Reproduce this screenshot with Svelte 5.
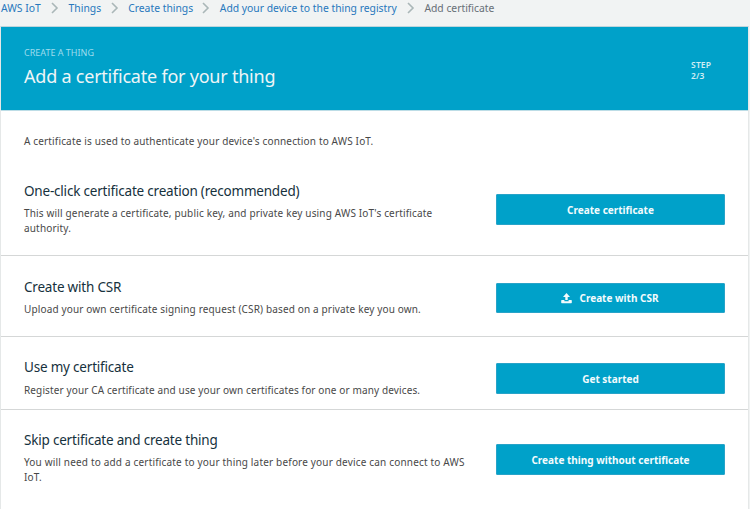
<script>
  const crumbs = [
    { label: 'AWS IoT', cls: 'c1' },
    { label: 'Things', cls: 'c2' },
    { label: 'Create things', cls: 'c3' },
    { label: 'Add your device to the thing registry', cls: 'c4' }
  ];
  const options = [
    { id: 'one-click', title: 'One-click certificate creation (recommended)', lines: ["This will generate a certificate, public key, and private key using AWS IoT's certificate", 'authority.'], action: 'Create certificate' },
    { id: 'csr', title: 'Create with CSR', lines: ['Upload your own certificate signing request (CSR) based on a private key you own.'], action: 'Create with CSR', upload: true },
    { id: 'own', title: 'Use my certificate', lines: ['Register your CA certificate and use your own certificates for one or many devices.'], action: 'Get started' },
    { id: 'skip', title: 'Skip certificate and create thing', lines: ['You will need to add a certificate to your thing later before your device can connect to AWS', 'IoT.'], action: 'Create thing without certificate' }
  ];
</script>

<div class="page">
  <nav>
    {#each crumbs as crumb}
      <a href="#top" class={crumb.cls}>{crumb.label}</a>
      <svg class="chevron" width="8" height="12" viewBox="0 0 8 12"><path d="M1 1l5 5-5 5" /></svg>
    {/each}
    <span class="current">Add certificate</span>
  </nav>
  <main>
    <header>
      <div>
        <p class="eyebrow">CREATE A THING</p>
        <h1>Add a certificate for your thing</h1>
      </div>
      <div class="step"><span>STEP</span><span>2/3</span></div>
    </header>
    <p class="intro">A certificate is used to authenticate your device's connection to AWS IoT.</p>
    {#each options as option}
      <section class={option.id}>
        <div class="copy">
          <h2>{option.title}</h2>
          {#each option.lines as line}<p>{line}</p>{/each}
        </div>
        <button>
          {#if option.upload}
            <svg class="upload" width="11" height="11" viewBox="0 0 11 11"><path d="M5.5 0L9 4H6.7v3H4.3V4H2zM.8 7h2.6v1.2h4.2V7h2.6q.6 0 .6.6v2q0 .6-.6.6H.8q-.6 0-.6-.6v-2Q.2 7 .8 7z" /></svg>
          {/if}
          <span>{option.action}</span>
        </button>
      </section>
    {/each}
  </main>
</div>

<style>
  :global(body) { margin: 0; overflow: hidden; background: #f2f3f3; }
  .page { width: 750px; height: 509px; overflow: hidden; background: #f1f3f3; font-family: 'Noto Sans', sans-serif; font-size: 10px; color: #484848; }
  p, h1, h2 { margin: 0; font-weight: 400; white-space: nowrap; }
  nav { display: flex; align-items: center; height: 16px; padding-left: 1px; margin-bottom: 10px; font-size: 10.35px; line-height: 16px; white-space: nowrap; }
  nav a { color: #2878bd; text-decoration: none; flex: none; }
  .c1 { width: 40px; } .c2 { width: 32px; } .c3 { width: 64px; } .c4 { width: 177px; }
  .chevron { flex: none; margin: 0 9.6px 0 10px; fill: none; stroke: #aab7b8; stroke-width: 1.6; }
  .current { color: #687078; }
  main { box-sizing: border-box; width: 749px; height: 483px; background: #fff; border: 1px solid #e5e8e8; border-top-color: #bed5dc; border-bottom: 0; }
  header { box-sizing: border-box; display: flex; justify-content: space-between; height: 84px; padding: 18px 37px 0 23px; background: #00a1c9; border-bottom: 1px solid #bddde6; }
  .eyebrow { color: #9edced; font-size: 9px; line-height: 15px; }
  h1 { color: #eef5f7; font-size: 18px; line-height: 28px; margin-top: 2px; letter-spacing: -0.22px; }
  .step { display: flex; flex-direction: column; color: #d0edf4; font-size: 8.5px; font-weight: 600; letter-spacing: .1px; line-height: 11px; padding-top: 14px; }
  .intro { padding: 22px 23px 0; height: 40px; line-height: 16px; box-sizing: border-box; letter-spacing: 0.155px; }
  section { box-sizing: border-box; display: flex; justify-content: space-between; padding: 0 23px; border-bottom: 1px solid #d5d7d7; }
  .one-click { height: 105px; padding-top: 29px; }
  .csr { height: 81px; padding-top: 20px; }
  .own { height: 73px; padding-top: 19px; }
  .skip { height: 99px; padding-top: 19px; border: 0; }
  h2 { font-size: 13.5px; line-height: 22px; color: #16313d; margin-bottom: 4px; letter-spacing: -0.2px; }
  .own h2 { margin-bottom: 5px; }
  .copy p { line-height: 15px; letter-spacing: 0.165px; }
  .csr p { letter-spacing: 0.15px; }
  .own p { letter-spacing: 0.13px; }
  .skip p { letter-spacing: 0.18px; }
  button { box-sizing: border-box; display: flex; align-items: center; justify-content: center; gap: 7px; width: 229px; height: 31px; margin-top: 14px; padding: 0; border: 1px solid #28a3c8; border-radius: 1px; background: #00a1c9; color: #f3fbfd; font: 700 10px/16px 'Noto Sans', sans-serif; }
  .csr button { height: 30px; margin-top: 7px; padding-right: 1px; }
  .own button { margin-top: 7px; }
  .skip button { margin-top: 15px; }
  .upload { fill: #f3fbfd; }
</style>
